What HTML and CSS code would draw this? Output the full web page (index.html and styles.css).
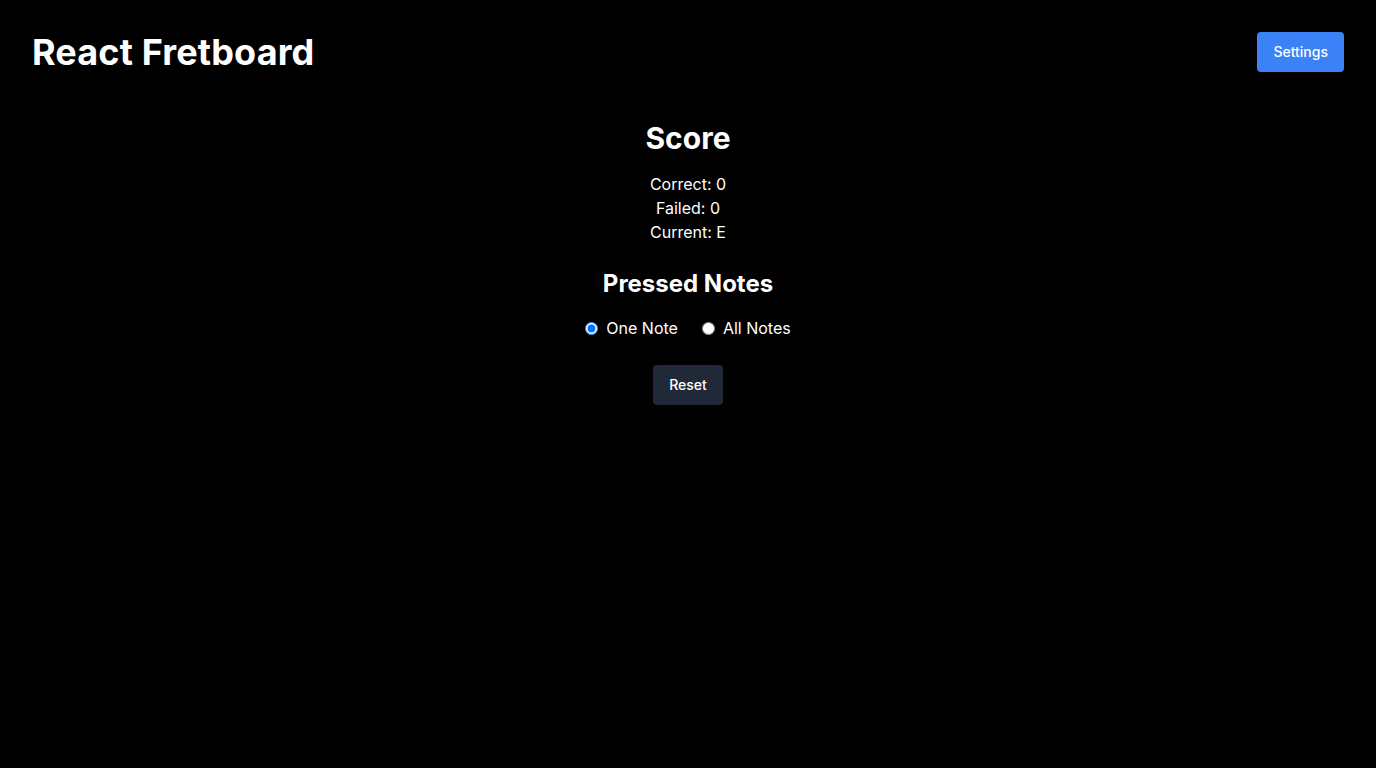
FILE: index.html
```html
<!DOCTYPE html>
<html lang="en">
<head>
<meta charset="utf-8">
<title>React Fretboard</title>
<link rel="stylesheet" href="styles.css">
</head>
<body>
<header class="header">
  <h1 class="title">React Fretboard</h1>
  <button class="btn btn-primary">Settings</button>
</header>
<main class="main">
  <h2 class="score-title">Score</h2>
  <div class="stats">
    <p>Correct: 0</p>
    <p>Failed: 0</p>
    <p>Current: E</p>
  </div>
  <h3 class="pressed-title">Pressed Notes</h3>
  <div class="radios">
    <label class="radio-label"><input type="radio" name="mode" checked> One Note</label>
    <label class="radio-label"><input type="radio" name="mode"> All Notes</label>
  </div>
  <button class="btn btn-dark">Reset</button>
</main>
</body>
</html>
```

FILE: styles.css
```css
* { box-sizing: border-box; }
html, body { margin: 0; padding: 0; }
body {
  background: #000;
  color: #fff;
  font-family: Inter, "Noto Sans", sans-serif;
  min-height: 768px;
}
.header {
  display: flex;
  justify-content: space-between;
  align-items: center;
  padding: 32px;
}
.title {
  margin: 0;
  font-size: 36px;
  line-height: 40px;
  font-weight: 700;
  letter-spacing: 0.15px;
}
.btn {
  font-family: inherit;
  font-size: 14px;
  font-weight: 500;
  line-height: 24px;
  padding: 8px 16px;
  border: none;
  border-radius: 4px;
  color: #fff;
  cursor: pointer;
}
.btn-primary { background: #3b82f6; }
.btn-dark { background: #1f2937; }
.main {
  display: flex;
  flex-direction: column;
  align-items: center;
  padding-top: 16px;
}
.score-title {
  margin: 0;
  font-size: 30px;
  line-height: 36px;
  font-weight: 700;
}
.stats {
  margin-top: 16px;
  text-align: center;
  font-size: 16px;
  line-height: 24px;
}
.stats p { margin: 0; }
.pressed-title {
  margin: 24px 0 0;
  font-size: 24px;
  line-height: 32px;
  font-weight: 700;
}
.radios {
  margin-top: 16px;
  display: flex;
  gap: 24px;
  font-size: 16px;
  line-height: 24px;
}
.radio-label {
  display: flex;
  align-items: center;
  gap: 5px;
}
.radio-label input { margin: 0 3px 0 0; }
.btn-dark { margin-top: 25px; }
```
